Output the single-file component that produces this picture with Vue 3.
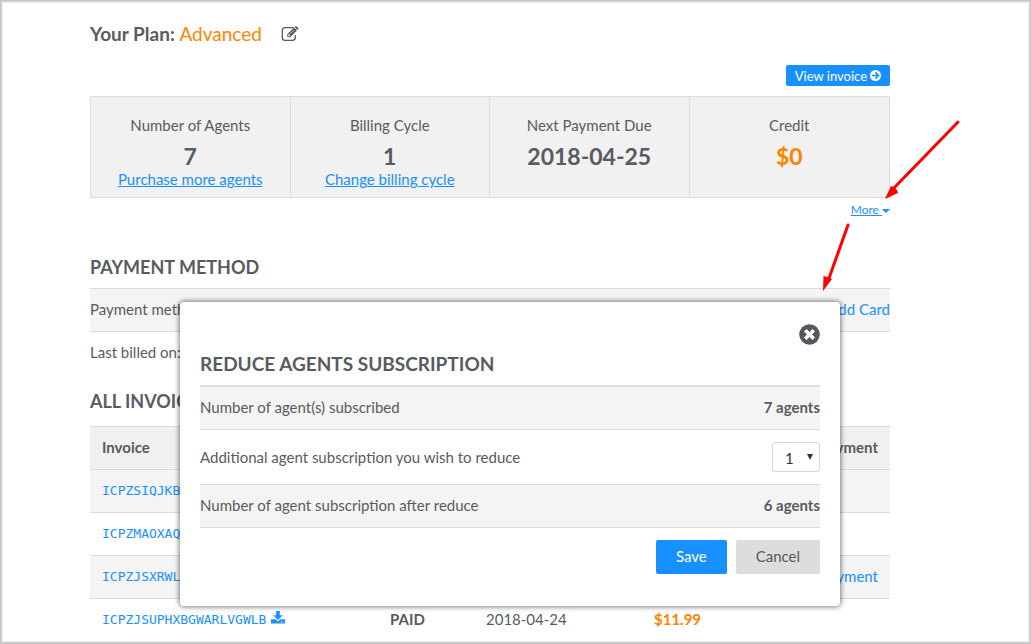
<script setup>
import { computed, ref } from 'vue'

const subscribed = 7
const reduceBy = ref(1)
const remaining = computed(() => subscribed - reduceBy.value)

const summary = [
  { label: 'Number of Agents', value: '7', link: 'Purchase more agents' },
  { label: 'Billing Cycle', value: '1', link: 'Change billing cycle' },
  { label: 'Next Payment Due', value: '2018-04-25' },
  { label: 'Credit', value: '$0', accent: true },
]

const invoices = [
  { id: 'ICPZSIQJKBA' },
  { id: 'ICPZMAOXAQX' },
  { id: 'ICPZJSXRWLV', pay: true },
  { id: 'ICPZJSUPHXBGWARLVGWLB', status: 'PAID', date: '2018-04-24', amount: '$11.99', download: true },
]
</script>

<template>
  <div class="page">
    <main class="content">
      <header class="plan">
        <h1>Your Plan: <span class="plan-name">Advanced</span></h1>
        <button class="icon-button" type="button" aria-label="Edit plan">
          <svg width="18" height="16" viewBox="0 0 18 16" fill="none">
            <path d="M12 1.7H4A2.7 2.7 0 0 0 1.3 4.4v7.3A2.7 2.7 0 0 0 4 14.3h7.6a2.7 2.7 0 0 0 2.7-2.7V9.7" stroke="currentColor" stroke-width="1.3" stroke-linecap="round" />
            <path fill-rule="evenodd" fill="currentColor" d="M6.3 8.3 13 1.6l2.9 2.9-6.700 6.700H6.300zM7.300 8.800v1.400h1.400l.7-.7L8 8.100zM9 7.700l.4.4 3.800-3.800-.4-.4zM13.600 1l.6-.6a1.100 1.100 0 0 1 1.500 0l1.400 1.400a1.100 1.100 0 0 1 0 1.500l-.6.6z" />
          </svg>
        </button>
      </header>

      <div class="toolbar">
        <button class="invoice-button" type="button">
          View invoice
          <svg width="11" height="11" viewBox="0 0 12 12">
            <circle cx="6" cy="6" r="6" fill="#fff" />
            <path d="M2.2 6h6.5M5.8 2.6 9.2 6 5.8 9.4" fill="none" stroke="#1890ff" stroke-width="1.7" />
          </svg>
        </button>
      </div>

      <section class="summary">
        <div v-for="item in summary" :key="item.label" class="summary-cell">
          <div class="summary-label">{{ item.label }}</div>
          <div class="summary-value" :class="{ accent: item.accent }">{{ item.value }}</div>
          <a v-if="item.link" href="#">{{ item.link }}</a>
        </div>
      </section>

      <div class="more"><a href="#">More <i class="caret"></i></a></div>

      <h2>PAYMENT METHOD</h2>
      <div class="row shaded"><span>Payment method:</span><a href="#">Add Card</a></div>
      <div class="row"><span>Last billed on:</span></div>

      <h2 class="invoices-title">ALL INVOICES</h2>
      <table class="invoices">
        <thead>
          <tr>
            <th class="col-id">Invoice</th>
            <th class="col-status" aria-label="Status"></th>
            <th class="col-date" aria-label="Date"></th>
            <th class="col-amount" aria-label="Amount"></th>
            <th class="col-pay">Payment</th>
          </tr>
        </thead>
        <tbody>
          <tr v-for="invoice in invoices" :key="invoice.id">
            <td>
              <a class="code" href="#">{{ invoice.id }}</a>
              <a v-if="invoice.download" class="download" href="#" aria-label="Download invoice">
                <svg width="14" height="13" viewBox="0 0 14 13" fill="currentColor">
                  <path d="M5.2 0h3.6v4.3h3L7 9 2.200 4.300h3z" />
                  <path fill-rule="evenodd" d="M0 8.300h4.600L7 10.500l2.400-2.200H14V12.500H0zM9.500 10.600v1h1v-1zM11.600 10.600v1h1v-1z" />
                </svg>
              </a>
            </td>
            <td class="status">{{ invoice.status }}</td>
            <td>{{ invoice.date }}</td>
            <td class="amount">{{ invoice.amount }}</td>
            <td class="col-pay"><a v-if="invoice.pay" href="#">Make payment</a></td>
          </tr>
        </tbody>
      </table>
    </main>

    <section class="dialog" role="dialog" aria-labelledby="dialog-title">
      <button class="icon-button close" type="button" aria-label="Close">
        <svg width="21" height="21" viewBox="0 0 21 21">
          <circle cx="10.500" cy="10.500" r="10.300" fill="currentColor" />
          <path d="m7.500 7.500 6 6M13.500 7.500l-6 6" stroke="#fff" stroke-width="3.500" stroke-linecap="square" stroke-linejoin="round" />
        </svg>
      </button>
      <h2 id="dialog-title">REDUCE AGENTS SUBSCRIPTION</h2>
      <div class="dialog-rows">
        <div class="row shaded"><span>Number of agent(s) subscribed</span><strong>{{ subscribed }} agents</strong></div>
        <div class="row tall">
          <label for="reduce">Additional agent subscription you wish to reduce</label>
          <span class="select">
            <select id="reduce" v-model.number="reduceBy">
              <option v-for="n in subscribed - 1" :key="n" :value="n">{{ n }}</option>
            </select>
          </span>
        </div>
        <div class="row shaded"><span>Number of agent subscription after reduce</span><strong>{{ remaining }} agents</strong></div>
      </div>
      <div class="actions">
        <button class="button primary" type="button">Save</button>
        <button class="button" type="button">Cancel</button>
      </div>
    </section>

    <svg class="arrows" width="150" height="180" viewBox="0 0 150 180" aria-hidden="true">
      <g stroke="#f00" stroke-width="3" stroke-linecap="round">
        <path d="M138 7 74 73" />
        <path d="M28 110 8 166" />
      </g>
      <path fill="#f00" d="M65 84 71 71l3 1 3 3 1 3zM3 176 3.500 161l4 1 4.500 2z" />
    </svg>
  </div>
</template>

<style>
body {
  margin: 0;
}
</style>

<style scoped>
.page {
  position: relative;
  box-sizing: border-box;
  height: 100vh;
  overflow: hidden;
  padding: 0 141px 0 90px;
  background: #fff;
  color: #585b61;
  font: 15px/20px Lato, "Open Sans", sans-serif;
}
.page::after {
  content: "";
  position: absolute;
  inset: 0;
  pointer-events: none;
  box-shadow: inset 0 0 0 1px #c5c5c8, inset 0 -1px 0 1px #cfcfd1, inset 0 0 0 2px #d6d6d8, inset 0 0 0 3px #ededef;
}
.page * {
  box-sizing: border-box;
}
a {
  color: #1890ff;
  text-decoration: none;
}
button,
select {
  font: inherit;
  cursor: pointer;
}
h1,
h2 {
  margin: 0;
  font-size: 18px;
  line-height: 24px;
  font-weight: 700;
}
.plan {
  display: flex;
  align-items: center;
  gap: 19px;
  padding-top: 22px;
}
.plan h1 {
  font-size: 19px;
}
.plan-name {
  color: #ff8400;
  font-weight: 400;
}
.icon-button {
  display: flex;
  padding: 0;
  border: 0;
  background: none;
  color: #55585f;
}
.toolbar {
  display: flex;
  justify-content: flex-end;
  margin: 19px 0 10px;
}
.invoice-button {
  display: flex;
  align-items: center;
  gap: 3px;
  height: 21px;
  padding: 0 9px;
  border: 0;
  border-radius: 2px;
  background: #1890ff;
  color: #fff;
  font-size: 13px;
}
.summary {
  display: grid;
  grid-template-columns: repeat(4, 1fr);
  height: 102px;
  border: 1px solid #dcdcdc;
  background: #f1f1f1;
  text-align: center;
}
.summary-cell {
  padding-top: 18px;
  border-right: 1px solid #dcdcdc;
}
.summary-cell:last-child {
  border-right: 0;
}
.summary-cell a,
.more a {
  text-decoration: underline;
}
.summary-value {
  padding-top: 8px;
  font-size: 23px;
  line-height: 26px;
  font-weight: 700;
}
.accent {
  color: #ff8400;
}
.more {
  padding: 2px 0 35px;
  text-align: right;
  font-size: 12px;
}
.caret {
  display: inline-block;
  border: 4px solid transparent;
  border-top-color: #1890ff;
  border-bottom: 0;
  vertical-align: middle;
}
.row {
  display: flex;
  align-items: center;
  justify-content: space-between;
  height: 43px;
  padding-bottom: 2px;
  border-top: 1px solid #dcdcdc;
}
h2 + .row {
  margin-top: 9px;
}
.shaded {
  background: #f4f4f4;
}
.invoices-title {
  margin: 15px 0 13px;
}
.invoices {
  width: 100%;
  table-layout: fixed;
  border-collapse: collapse;
}
.invoices th,
.invoices td {
  height: 43px;
  padding: 0 12px 2px;
  border-top: 1px solid #dcdcdc;
  text-align: left;
  white-space: nowrap;
}
.invoices tbody {
  border-bottom: 1px solid #dcdcdc;
}
.invoices th {
  background: #f0f0f0;
  font-weight: 700;
}
.invoices tbody tr:nth-child(odd) {
  background: #f4f4f4;
}
.col-id {
  width: 36%;
}
.col-status {
  width: 12%;
}
.col-date {
  width: 21%;
}
.col-amount {
  width: 14%;
}
.invoices .col-pay {
  text-align: right;
}
.code {
  font: 13px/20px "DejaVu Sans Mono", "Liberation Mono", monospace;
}
.download {
  display: inline-block;
  margin-left: 5px;
}
.invoices .status,
.invoices .amount,
strong {
  font-weight: 700;
}
.amount {
  color: #ff8400;
}
.dialog {
  position: absolute;
  top: 302px;
  left: 180px;
  right: 191px;
  padding: 22px 20px 32px;
  border-radius: 4px;
  background: #fff;
  box-shadow: 0 0 5px 1px rgba(0, 0, 0, 0.5);
}
.close {
  margin-left: auto;
}
.dialog h2 {
  margin: 7px 0 9px;
  font-size: 19px;
}
.dialog-rows {
  border-top: 1px solid #dcdcdc;
  border-bottom: 1px solid #dcdcdc;
}
.tall {
  height: 55px;
  padding-bottom: 0;
}
.select {
  position: relative;
  display: block;
}
.select::after {
  content: "";
  position: absolute;
  top: 12px;
  right: 7px;
  border: 3px solid transparent;
  border-top: 6px solid #333;
  border-bottom: 0;
  pointer-events: none;
}
select {
  display: block;
  width: 48px;
  height: 30px;
  padding: 2px 12px 0;
  appearance: none;
  border: 1px solid #cfdadd;
  border-radius: 3px;
  background: #fff;
  color: #333;
}
.actions {
  display: flex;
  justify-content: flex-end;
  gap: 9px;
  padding-top: 12px;
}
.button {
  height: 34px;
  padding: 0 20px 2px;
  border: 0;
  border-radius: 2px;
  background: #ddd;
  color: #55585f;
}
.primary {
  background: #1890ff;
  color: #fff;
}
.arrows {
  position: absolute;
  top: 115px;
  left: calc(100% - 211px);
  pointer-events: none;
}
</style>
